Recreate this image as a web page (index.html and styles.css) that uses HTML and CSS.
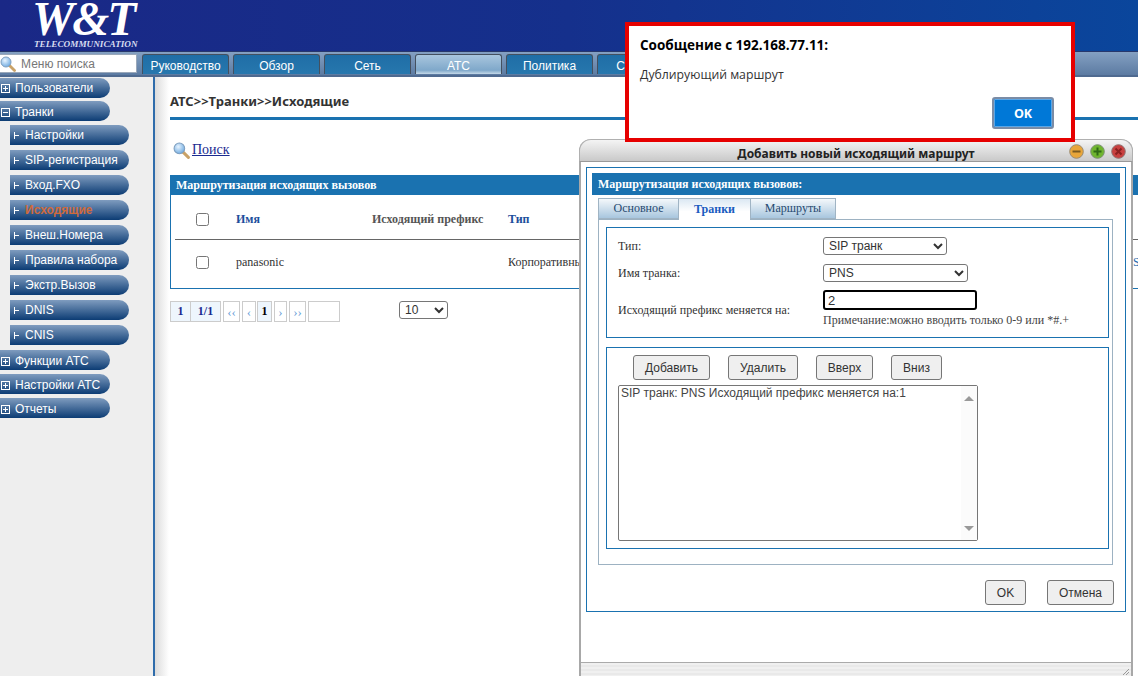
FILE: index.html
```html
<!DOCTYPE html>
<html lang="ru">
<head>
<meta charset="utf-8">
<title>W&amp;T Telecommunication</title>
<link rel="stylesheet" href="styles.css">
</head>
<body>
<svg class="defs" width="0" height="0" aria-hidden="true">
  <defs>
    <radialGradient id="glass" cx="40%" cy="35%" r="70%"><stop offset="0" stop-color="#e8f4ff"/><stop offset="1" stop-color="#6aa8e0"/></radialGradient>
    <symbol id="mag" viewBox="0 0 16 16">
      <path d="M9.5 9.5 L14.5 14.5" stroke="#c9a268" stroke-width="2.8" stroke-linecap="round"/>
      <circle cx="6" cy="6" r="5" fill="url(#glass)" stroke="#7f9fbf" stroke-width="1"/>
    </symbol>
    <symbol id="plus" viewBox="0 0 9 9">
      <rect x=".5" y=".5" width="8" height="8" fill="none" stroke="#fff"/>
      <path d="M2 4.5H7M4.5 2V7" stroke="#fff"/>
    </symbol>
    <symbol id="minus" viewBox="0 0 9 9">
      <rect x=".5" y=".5" width="8" height="8" fill="none" stroke="#fff"/>
      <path d="M2 4.5H7" stroke="#fff"/>
    </symbol>
    <symbol id="tee" viewBox="0 0 6 9">
      <path d="M.5 1V8M.5 4.5H5" stroke="#fff"/>
    </symbol>
  </defs>
</svg>

<header class="top">
  <div class="logo">
    <div class="logo-mark">W&amp;T</div>
    <div class="logo-sub">TELECOMMUNICATION</div>
  </div>
</header>

<nav class="navbar">
  <div class="search-box">
    <svg class="search-icon"><use href="#mag"/></svg>
    <span>Меню поиска</span>
  </div>
  <div class="tabs">
    <a class="tab">Руководство</a>
    <a class="tab">Обзор</a>
    <a class="tab">Сеть</a>
    <a class="tab active">АТС</a>
    <a class="tab">Политика</a>
    <a class="tab">Система</a>
  </div>
</nav>

<div class="main">
  <aside class="sidebar">
    <div class="item first"><svg class="ico"><use href="#plus"/></svg>Пользователи</div>
    <div class="item"><svg class="ico"><use href="#minus"/></svg>Транки</div>
    <div class="item sub"><svg class="tee"><use href="#tee"/></svg>Настройки</div>
    <div class="item sub"><svg class="tee"><use href="#tee"/></svg>SIP-регистрация</div>
    <div class="item sub"><svg class="tee"><use href="#tee"/></svg>Вход.FXO</div>
    <div class="item sub current"><svg class="tee"><use href="#tee"/></svg>Исходящие</div>
    <div class="item sub"><svg class="tee"><use href="#tee"/></svg>Внеш.Номера</div>
    <div class="item sub"><svg class="tee"><use href="#tee"/></svg>Правила набора</div>
    <div class="item sub"><svg class="tee"><use href="#tee"/></svg>Экстр.Вызов</div>
    <div class="item sub"><svg class="tee"><use href="#tee"/></svg>DNIS</div>
    <div class="item sub"><svg class="tee"><use href="#tee"/></svg>CNIS</div>
    <div class="item"><svg class="ico"><use href="#plus"/></svg>Функции АТС</div>
    <div class="item"><svg class="ico"><use href="#plus"/></svg>Настройки АТС</div>
    <div class="item"><svg class="ico"><use href="#plus"/></svg>Отчеты</div>
  </aside>

  <section class="content">
    <h1 class="crumbs">АТС&gt;&gt;Транки&gt;&gt;Исходящие</h1>
    <div class="find">
      <svg class="find-icon"><use href="#mag"/></svg>
      <a class="find-link">Поиск</a>
    </div>
    <div class="table">
      <div class="bar">Маршрутизация исходящих вызовов</div>
      <div class="row head">
        <input type="checkbox" class="check">
        <span class="c-name name-h">Имя</span>
        <span class="c-name">Исходящий префикс</span>
        <span class="c-type">Тип</span>
        <span class="c-last"></span>
      </div>
      <div class="row body-row">
        <input type="checkbox" class="check">
        <span class="c-name">panasonic</span>
        <span class="c-name"></span>
        <span class="c-type">Корпоративный</span>
        <span class="c-last">SIP</span>
      </div>
    </div>
    <div class="pager">
      <div class="pages">
        <span class="pg info w21">1</span><span class="pg info w30">1/1</span>
        <span class="pg link w17 sp">‹‹</span>
        <span class="pg link w14 sp">‹</span>
        <span class="pg cur w15">1</span>
        <span class="pg link w13 sp">›</span>
        <span class="pg link w17 sp">››</span>
        <span class="pg blank w32 sp"></span>
      </div>
      <select class="field size"><option>10</option></select>
    </div>
  </section>
</div>

<div class="dialog">
  <div class="dlg-title">
    <span class="dlg-name">Добавить новый исходящий маршрут</span>
    <span class="dots">
      <svg width="15" height="15" viewBox="0 0 15 15"><circle cx="7.5" cy="7.5" r="6.8" fill="#e8a63a" stroke="#9a8a70"/><path d="M3.5 7.5H11.5" stroke="#7a5a20" stroke-width="2"/></svg>
      <svg width="15" height="15" viewBox="0 0 15 15"><circle cx="7.5" cy="7.5" r="6.8" fill="#6fb52f" stroke="#7a9070"/><path d="M3.5 7.5H11.5M7.5 3.5V11.5" stroke="#2f6a15" stroke-width="2"/></svg>
      <svg width="15" height="15" viewBox="0 0 15 15"><circle cx="7.5" cy="7.5" r="6.8" fill="#c8403f" stroke="#907070"/><path d="M4.5 4.5L10.5 10.5M10.5 4.5L4.5 10.5" stroke="#8a2020" stroke-width="2"/></svg>
    </span>
  </div>
  <div class="dlg-body">
    <div class="outer">
      <div class="bar bar-dlg">Маршрутизация исходящих вызовов:</div>
      <div class="dtabs">
        <span class="dtab w80">Основное</span>
        <span class="dtab on w72">Транки</span>
        <span class="dtab w86">Маршруты</span>
      </div>
      <div class="panel">
        <div class="box box-form">
          <label class="lbl">Тип:</label>
          <select class="field s124"><option>SIP транк</option></select>
          <label class="lbl">Имя транка:</label>
          <select class="field s145"><option>PNS</option></select>
          <label class="lbl span2">Исходящий префикс меняется на:</label>
          <input class="prefix" type="text" value="2">
          <div class="note">Примечание:можно вводить только 0-9 или *#.+</div>
        </div>
        <div class="box box-list">
          <div class="btns">
            <button class="btn w77">Добавить</button>
            <button class="btn w70">Удалить</button>
            <button class="btn w57">Вверх</button>
            <button class="btn w51">Вниз</button>
          </div>
          <div class="list">
            <div class="list-text">SIP транк: PNS Исходящий префикс меняется на:1</div>
            <div class="rail"><i class="up"></i><i class="down"></i></div>
          </div>
        </div>
      </div>
      <div class="actions">
        <button class="btn w41">OK</button>
        <button class="btn w67">Отмена</button>
      </div>
    </div>
  </div>
  <div class="status">
    <svg class="grip" width="8" height="8" viewBox="0 0 8 8"><path d="M1 7L7 1M4 7L7 4" stroke="#999"/></svg>
  </div>
</div>

<div class="alert">
  <div class="alert-title">Сообщение с 192.168.77.11:</div>
  <div class="alert-msg">Дублирующий маршрут</div>
  <div class="alert-foot"><button class="alert-ok">OK</button></div>
</div>
</body>
</html>
```
FILE: styles.css
```css
* { box-sizing: border-box; }
html, body { margin: 0; height: 100%; }
body {
  position: relative;
  width: 1138px;
  height: 676px;
  overflow: hidden;
  display: flex;
  flex-direction: column;
  background: #fff;
  font-family: "Liberation Serif", serif;
  font-size: 12px;
  color: #333;
}
.defs { position: absolute; }

/* header */
.top {
  height: 52px;
  flex: none;
  padding-left: 32px;
  background: linear-gradient(90deg, #1a2886 0%, #15308c 50%, #0a469c 100%);
  border-bottom: 1px solid #28386c;
}
.logo { width: 108px; color: #fff; }
.logo-mark {
  font: italic bold 47.5px/38px "Liberation Serif", serif;
  letter-spacing: -2px;
  height: 38px;
  white-space: nowrap;
}
.logo-sub {
  font: italic bold 9.2px/10px "Liberation Serif", serif;
  color: #d7dcf0;
  margin: 1px 0 0 2px;
  white-space: nowrap;
}

/* nav */
.navbar {
  height: 25px;
  flex: none;
  display: flex;
  padding-top: 2px;
  background: linear-gradient(#84a0c2, #5c7ba2);
  border-bottom: 2px solid #4f6a90;
}
.search-box {
  width: 137px;
  height: 19px;
  background: #fff;
  display: flex;
  align-items: center;
  font: 12px "Liberation Sans", sans-serif;
  color: #777;
  border: 1px solid #9aa8ba;
  border-left: none;
}
.search-icon { width: 16px; height: 16px; margin-right: 5px; flex: none; }
.tabs { display: flex; gap: 4px; margin-left: 5px; }
.tab {
  width: 87px;
  height: 20px;
  padding-top: 3px;
  text-align: center;
  font: 12px/16px "Liberation Sans", sans-serif;
  color: #fff;
  background: linear-gradient(#1f6ea6, #2777ae);
  border: 1px solid #44505f;
  border-bottom: none;
  border-radius: 3px 3px 0 0;
}
.tab.active { background: linear-gradient(#a9c6de, #7fa8ca 80%, #c4d8e8); }

/* layout */
.main { flex: 1; display: flex; min-height: 0; }
.sidebar {
  width: 155px;
  flex: none;
  padding-top: 1px;
  background: #eee;
  border-right: 2px solid #2f6cab;
}
.item {
  width: 110px;
  height: 20px;
  margin-bottom: 4px;
  display: flex;
  align-items: center;
  padding: 3px 0 0 1px;
  font: 12px/17px "Liberation Sans", sans-serif;
  color: #fff;
  background: linear-gradient(#7f9cbf, #0c3c74);
  border-radius: 0 12px 12px 0;
  white-space: nowrap;
}
.item.first { margin-bottom: 3px; padding-top: 1px; }
.item.sub {
  width: 119px;
  margin-left: 10px;
  margin-bottom: 5px;
  padding: 0 0 0 4px;
}
.item.current { color: #cf6a3c; font-weight: bold; }
.ico { width: 9px; height: 9px; margin-right: 5px; flex: none; }
.tee { width: 6px; height: 9px; margin-right: 5px; flex: none; }

.content {
  flex: 1;
  min-width: 0;
  padding-left: 15px;
  background: linear-gradient(90deg, #dcdcdc 0, #fff 14px) no-repeat;
}
.crumbs {
  margin: 0;
  height: 43px;
  padding-top: 15px;
  font: bold 13px/18px "Noto Sans", sans-serif;
  color: #333;
  border-bottom: 3px solid #1a72b0;
  white-space: nowrap;
}
.find {
  height: 55px;
  display: flex;
  align-items: center;
  padding: 5px 0 0 3px;
}
.find-icon { width: 17px; height: 17px; margin-right: 2px; }
.find-link {
  font-size: 14px;
  color: #1a2a90;
  text-decoration: underline;
}
.table { border: solid #1a72b0; border-width: 0 0 1px 1px; }
.bar {
  height: 20px;
  margin-left: -1px;
  padding-left: 6px;
  background: #1a72b0;
  color: #fff;
  font: bold 12px/20px "Liberation Serif", serif;
  white-space: nowrap;
}
.row {
  display: flex;
  align-items: center;
  margin-left: 4px;
  padding-left: 21px;
  white-space: nowrap;
}
.row.head { height: 45px; padding-top: 4px; border-bottom: 1px solid #666; font-weight: bold; color: #555; }
.row.body-row { height: 48px; padding-bottom: 4px; }
.check { width: 13px; height: 13px; margin: 0 27px 0 0; flex: none; }
.c-name { width: 136px; flex: none; }
.name-h { color: #1c4f9c; }
.c-type { width: 625px; flex: none; color: #333; }
.head .c-type { color: #1c4f9c; }
.c-last { flex: 1; min-width: 0; overflow: hidden; color: #2a6ab0; }

.pager { display: flex; align-items: flex-start; margin-top: 12px; }
.pages { display: flex; width: 229px; height: 21px; }
.pg {
  height: 21px;
  border: 1px solid #ccc;
  text-align: center;
  font: 12px/19px "Liberation Serif", serif;
  flex: none;
}
.pg.info { background: #eef6fd; color: #1a2a90; font-weight: bold; }
.pg.info + .pg.info { border-left: none; }
.pg.link { color: #6a9fd8; font-size: 13px; }
.pg.cur { background: #eef6fd; color: #000; font-weight: bold; margin-left: 1px; }
.sp { margin-left: 2px; }
.w21 { width: 21px; } .w30 { width: 30px; } .w17 { width: 17px; }
.w14 { width: 14px; } .w15 { width: 15px; } .w13 { width: 13px; } .w32 { width: 32px; }

.field {
  height: 18px;
  padding: 0 0 0 1px;
  font: 12px "Liberation Sans", sans-serif;
  color: #333;
  background: #fff;
  border: 1px solid #767676;
  border-radius: 3px;
}
.size { width: 49px; margin-left: 0; }

/* dialog */
.dialog {
  position: absolute;
  left: 579px;
  top: 139px;
  width: 554px;
  height: 537px;
  display: flex;
  flex-direction: column;
  background: #fff;
  border: solid #a8a8a8;
  border-width: 0 2px;
  border-radius: 12px 12px 0 0;
}
.dlg-title {
  height: 23px;
  flex: none;
  position: relative;
  margin: 0 -2px;
  text-align: center;
  padding: 5px 0 0 0;
  font: bold 12px/18px "Noto Sans", sans-serif;
  color: #222;
  background: linear-gradient(#f4f4f4, #c9c9c9);
  border: 1px solid #b0b0b0;
  border-bottom-color: #999;
  border-radius: 12px 12px 0 0;
}
.dots {
  position: absolute;
  right: 6px;
  top: 4px;
  display: flex;
  gap: 6px;
}
.dlg-body { padding: 5px 5px 0; flex: none; }
.outer {
  width: 540px;
  height: 445px;
  padding: 5px;
  border: 1px solid #1a72b0;
}
.bar-dlg { margin-left: 0; height: 22px; line-height: 22px; width: 528px; }
.dtabs { display: flex; margin: 3px 0 0 6px; height: 21px; }
.dtab {
  height: 21px;
  text-align: center;
  color: #264a70;
  font: 12px/19px "Liberation Serif", serif;
  background: linear-gradient(#f4f8fb, #a8c6de);
  border: 1px solid #a0b4c4;
  border-right: none;
}
.dtab:last-child { border-right: 1px solid #a0b4c4; }
.dtab.on {
  height: 22px;
  color: #1a5cc0;
  font-weight: bold;
  line-height: 20px;
  background: linear-gradient(#dbe8f3, #fff 60%);
  border-bottom: none;
  position: relative;
}
.w80 { width: 80px; } .w72 { width: 72px; } .w86 { width: 86px; }
.panel {
  width: 515px;
  height: 346px;
  margin-left: 6px;
  padding: 7px 3px 0 7px;
  border: 1px solid #9db2c2;
}
.box { width: 503px; border: 1px solid #1a72b0; }
.box-form {
  height: 111px;
  margin-bottom: 9px;
  padding: 9px 0 0 11px;
  display: grid;
  grid-template-columns: 205px 1fr;
  grid-template-rows: 18px 18px 20px auto;
  row-gap: 9px;
  align-items: center;
}
.lbl { font-size: 12px; color: #333; }
.span2 { grid-row: 3 / span 2; align-self: start; margin-top: 12px; }
.s124 { width: 124px; }
.s145 { width: 145px; }
.prefix {
  width: 154px;
  height: 20px;
  margin-top: -2px;
  padding: 0 0 0 3px;
  font: 13px "Liberation Sans", sans-serif;
  color: #333;
  background: #fff;
  border: 2px solid #000;
  border-radius: 3px;
  outline: none;
}
.note { align-self: start; margin-top: -7px; font-size: 12px; color: #444; white-space: nowrap; }
.box-list { height: 202px; padding: 7px 0 0 11px; }
.btns { display: flex; gap: 18px; padding-left: 15px; }
.btn {
  height: 25px;
  padding: 0;
  font: 12px "Liberation Sans", sans-serif;
  color: #333;
  background: #efefef;
  border: 1px solid #767676;
  border-radius: 3px;
}
.w77 { width: 77px; } .w70 { width: 70px; } .w57 { width: 57px; } .w51 { width: 51px; }
.w41 { width: 41px; } .w67 { width: 67px; }
.list {
  width: 360px;
  height: 156px;
  margin-top: 5px;
  display: flex;
  border: 1px solid #767676;
  border-radius: 2px;
}
.list-text {
  flex: 1;
  padding: 0 2px;
  font: 12px/14px "Liberation Sans", sans-serif;
  color: #444;
}
.rail {
  width: 16px;
  flex: none;
  padding: 10px 3px 9px;
  display: flex;
  flex-direction: column;
  justify-content: space-between;
  align-items: center;
  background: #fbfbfb;
}
.up, .down { width: 0; height: 0; border: 5px solid transparent; }
.up { border-top: none; border-bottom: 5px solid #999; }
.down { border-bottom: none; border-top: 5px solid #999; }
.actions {
  display: flex;
  justify-content: flex-end;
  gap: 21px;
  margin: 15px 6px 0 0;
}
.status {
  margin-top: auto;
  height: 14px;
  position: relative;
  background: repeating-linear-gradient(#f0f0f0 0 2px, #e9e9e9 2px 4px);
  border-top: 1px solid #aaa;
}
.grip { position: absolute; right: 1px; bottom: 0; }

/* alert */
.alert {
  position: absolute;
  left: 625px;
  top: 22px;
  width: 450px;
  height: 120px;
  display: flex;
  flex-direction: column;
  padding: 11px 16px 9px 11px;
  background: #fff;
  border: 4px solid #e60000;
  font-family: "Open Sans", sans-serif;
  color: #000;
}
.alert-title { font-size: 13.5px; line-height: 17px; font-weight: bold; }
.alert-msg { margin-top: 12px; font-size: 12.25px; line-height: 17px; color: #333; }
.alert-foot { margin-top: auto; display: flex; justify-content: flex-end; margin-right: 1px; }
.alert-ok {
  width: 62px;
  height: 32px;
  padding: 0;
  font: bold 12.5px "Open Sans", sans-serif;
  color: #fff;
  background: #0078d7;
  border: 2px solid #7a8ca6;
  border-radius: 3px;
  box-shadow: inset 0 0 0 1px #5aa6e6;
}
```
